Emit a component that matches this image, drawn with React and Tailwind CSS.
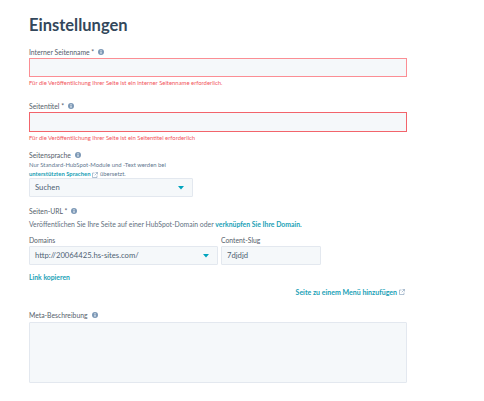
import React from 'react';

function InfoDot() {
  return (
    <svg width="6" height="6" viewBox="0 0 12 12" className="ml-1 shrink-0">
      <circle cx="6" cy="6" r="6" fill="#7c98b6" />
      <rect x="5" y="5" width="2" height="4.5" fill="#fff" />
      <rect x="5" y="2.4" width="2" height="1.6" fill="#fff" />
    </svg>
  );
}

function ExternalIcon() {
  return (
    <svg width="6" height="6" viewBox="0 0 12 12" fill="none" stroke="#7c98b6" strokeWidth="1.2" className="ml-0.5 inline-block shrink-0">
      <path d="M5 2H1v9h9V7" />
      <path d="M7 1h4v4M11 1L5.5 6.5" />
    </svg>
  );
}

function Caret() {
  return (
    <svg width="6" height="4" viewBox="0 0 6 4">
      <path d="M0 0h6L3 3.5z" fill="#00a4bd" />
    </svg>
  );
}

function Label({ children, info = true, className = '' }) {
  return (
    <div className={`flex h-2.5 items-center text-[6.8px] leading-[10px] text-[#55606b] ${className}`}>
      <span>{children}</span>
      {info && <InfoDot />}
    </div>
  );
}

function ErrorInput({ message, height = 'h-[19px]', border = 'border-[#fb8e94]' }) {
  return (
    <>
      <div className={`mt-[1px] w-[378px] border bg-[#f5f8fa] ${height} ${border}`} />
      <p className="mt-[2px] h-2 text-[5.9px] leading-[8px] text-[#f2545b]">{message}</p>
    </>
  );
}

function Select({ value, className = '' }) {
  return (
    <div className={`flex h-[19px] items-center justify-between rounded-[1px] border border-[#e3e8ef] bg-[#f5f8fa] pl-[5px] pr-[8px] text-[7.7px] text-[#4f6274] ${className}`}>
      <span>{value}</span>
      <Caret />
    </div>
  );
}

export default function App() {
  return (
    <div className="h-[401px] w-[484px] overflow-hidden bg-white pl-[29px] font-['Lato','Open_Sans',sans-serif]">
      <h1 className="pt-[15px] text-[16.5px] font-bold leading-5 text-[#33475b]">Einstellungen</h1>

      <Label className="mt-[12px]">Interner Seitenname *</Label>
      <ErrorInput message="Für die Veröffentlichung Ihrer Seite ist ein interner Seitenname erforderlich." />

      <Label className="mt-[14px]">Seitentitel *</Label>
      <ErrorInput height="h-5" border="border-[#f2646b]" message="Für die Veröffentlichung Ihrer Seite ist ein Seitentitel erforderlich" />

      <Label className="mt-[8px]">Seitensprache</Label>
      <p className="text-[5.9px] leading-[9px] text-[#5f7890]">
        Nur Standard-HubSpot-Module und -Text werden bei
        <br />
        <span className="font-bold text-[#1a9fb6]">unterstützten Sprachen</span>
        <ExternalIcon /> übersetzt.
      </p>
      <Select value="Suchen" className="w-[164px]" />

      <Label className="mt-[9px]">Seiten-URL *</Label>
      <p className="mt-[3px] text-[6.85px] leading-[10px] text-[#5f7080]">
        Veröffentlichen Sie Ihre Seite auf einer HubSpot-Domain oder{' '}
        <span className="font-bold text-[#1a9fb6]">verknüpfen Sie Ihre Domain.</span>
      </p>

      <div className="mt-[6px] flex gap-[3px]">
        <div>
          <Label info={false}>Domains</Label>
          <Select value="http://20064425.hs-sites.com/" className="mt-[1px] w-[189px]" />
        </div>
        <div>
          <Label info={false}>Content-Slug</Label>
          <div className="mt-[1px] flex h-[19px] w-[100px] items-center rounded-[1px] border border-[#e3e8ef] bg-[#f5f8fa] pl-[5px] text-[7.7px] text-[#4f6274]">7djdjd</div>
        </div>
      </div>

      <div className="mt-[7px] h-2.5 text-[6.8px] font-bold leading-[10px] text-[#1a9fb6]">Link kopieren</div>

      <div className="mt-[5px] flex h-2.5 w-[376px] items-center justify-end text-[7px] font-bold leading-[10px] text-[#1a9fb6]">
        Seite zu einem Menü hinzufügen
        <ExternalIcon />
      </div>

      <Label className="mt-[13px]">Meta-Beschreibung</Label>
      <div className="mt-[2px] h-[61px] w-[378px] rounded-[1px] border border-[#e3e8ef] bg-[#f5f8fa]" />
    </div>
  );
}
